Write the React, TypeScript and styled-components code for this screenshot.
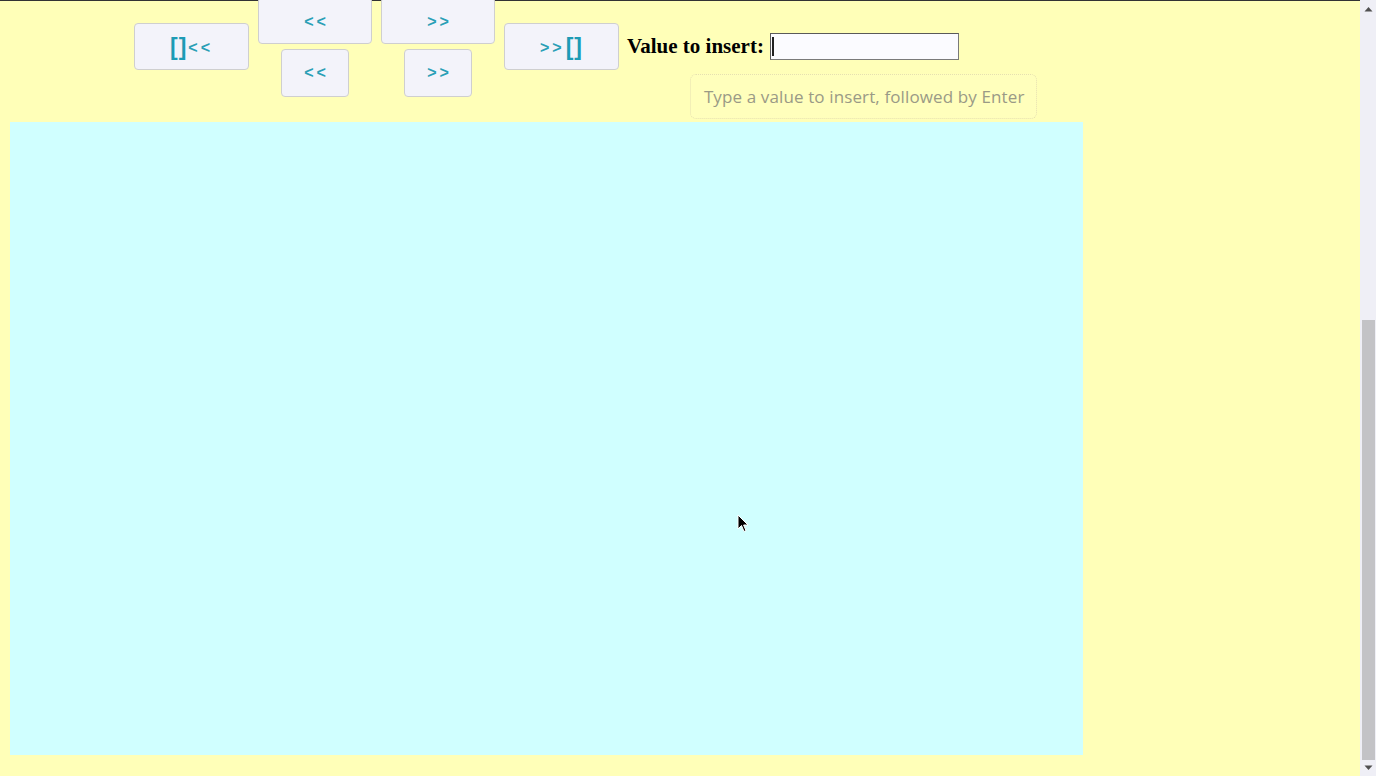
import React from "react";
import styled, { createGlobalStyle } from "styled-components";

const GlobalStyle = createGlobalStyle`
  html, body {
    margin: 0;
    padding: 0;
    height: 100%;
    overflow: hidden;
    background: #ffffb8;
  }
  #root {
    height: 100%;
  }
`;

const App: React.FC = () => {
  return (
    <>
      <GlobalStyle />
      <Page>
        <Main>
          <TopLine />
          <Toolbar>
            <SideButton>
              <Bracket>[]</Bracket>
              <Arrows>&lt;&lt;</Arrows>
            </SideButton>
            <StepColumn>
              <WideButton>
                <Arrows>&lt;&lt;</Arrows>
              </WideButton>
              <SmallButton>
                <Arrows>&lt;&lt;</Arrows>
              </SmallButton>
            </StepColumn>
            <StepColumn>
              <WideButton>
                <Arrows>&gt;&gt;</Arrows>
              </WideButton>
              <SmallButton>
                <Arrows>&gt;&gt;</Arrows>
              </SmallButton>
            </StepColumn>
            <SideButton>
              <Arrows>&gt;&gt;</Arrows>
              <Bracket>[]</Bracket>
            </SideButton>
            <InsertBox>
              <Label>Value to insert:</Label>
              <InputWrap>
                <ValueInput type="text" />
                <Caret />
                <Tooltip>Type a value to insert, followed by Enter</Tooltip>
              </InputWrap>
            </InsertBox>
          </Toolbar>
          <Canvas>
            <Pointer>
              <svg width="12" height="19" viewBox="0 0 12 19">
                <path
                  d="M1 1 L1 15 L4.5 11.5 L7 17.5 L9 16.6 L6.6 11 L11 11 Z"
                  fill="#000"
                  stroke="#fff"
                  strokeWidth="1"
                />
              </svg>
            </Pointer>
          </Canvas>
        </Main>
        <Scrollbar>
          <ScrollArrow>
            <svg width="9" height="6" viewBox="0 0 9 6">
              <path d="M0.5 5.5 L4.5 1 L8.5 5.5 Z" fill="#505050" />
            </svg>
          </ScrollArrow>
          <Track>
            <Thumb />
          </Track>
          <ScrollArrow>
            <svg width="9" height="6" viewBox="0 0 9 6">
              <path d="M0.5 0.5 L4.5 5 L8.5 0.5 Z" fill="#505050" />
            </svg>
          </ScrollArrow>
        </Scrollbar>
      </Page>
    </>
  );
};

const Page = styled.div`
  display: flex;
  width: 100%;
  height: 100%;
`;

const Main = styled.div`
  flex: 1;
  display: flex;
  flex-direction: column;
  overflow: hidden;
`;

const TopLine = styled.div`
  height: 1px;
  background: #333;
  flex-shrink: 0;
`;

const Toolbar = styled.div`
  display: flex;
  align-items: flex-start;
  gap: 9px;
  margin-top: -4px;
  padding-left: 134px;
  height: 100px;
  flex-shrink: 0;
`;

const ButtonBase = styled.div`
  box-sizing: border-box;
  display: flex;
  align-items: center;
  justify-content: center;
  gap: 1px;
  background: #f3f3fa;
  border: 1px solid #cfcfcf;
  border-radius: 4px;
  color: #2a9fb6;
  font-family: "Liberation Sans", Arial, sans-serif;
  font-weight: bold;
  cursor: pointer;
`;

const SideButton = styled(ButtonBase)`
  width: 115px;
  height: 47px;
  margin-top: 26px;
  padding-top: 2px;
`;

const StepColumn = styled.div`
  width: 114px;
  display: flex;
  flex-direction: column;
  align-items: center;
  gap: 5px;
`;

const WideButton = styled(ButtonBase)`
  width: 114px;
  height: 47px;
  padding-top: 3px;
  padding-left: 3px;
`;

const SmallButton = styled(ButtonBase)`
  width: 68px;
  height: 48px;
  padding-left: 3px;
`;

const Arrows = styled.span`
  font-size: 16px;
  letter-spacing: 3px;
`;

const Bracket = styled.span`
  font-size: 23px;
  letter-spacing: 1px;
  color: #1d9bb5;
`;

const InsertBox = styled.div`
  display: flex;
  align-items: center;
  margin-top: 36px;
  margin-left: -1px;
`;

const Label = styled.label`
  font-family: "Liberation Serif", "Times New Roman", serif;
  font-weight: bold;
  font-size: 21px;
  color: #000;
`;

const InputWrap = styled.div`
  position: relative;
  margin-left: 6px;
`;

const ValueInput = styled.input`
  box-sizing: border-box;
  display: block;
  width: 189px;
  height: 27px;
  border: 1px solid #7a7a7a;
  border-top-color: #5a5a5a;
  border-left-color: #5a5a5a;
  background: #fbfbff;
  outline: none;
  padding: 0 3px;
`;

const Caret = styled.span`
  position: absolute;
  left: 2px;
  top: 4px;
  width: 2px;
  height: 19px;
  background: #222;
`;

const Tooltip = styled.div`
  position: absolute;
  left: -80px;
  top: 41px;
  box-sizing: border-box;
  width: 347px;
  height: 45px;
  padding: 0 0 0 13px;
  display: flex;
  align-items: center;
  white-space: nowrap;
  border: 1px dotted #e6e0b0;
  border-radius: 6px;
  background: #ffffbc;
  color: #9a9a86;
  font-family: "Open Sans", "Noto Sans", sans-serif;
  font-size: 17px;
  letter-spacing: 0.12px;
`;

const Canvas = styled.div`
  position: relative;
  width: 1073px;
  height: 633px;
  margin-top: 25px;
  margin-left: 10px;
  background: #d0ffff;
  flex-shrink: 0;
`;

const Pointer = styled.div`
  position: absolute;
  left: 727px;
  top: 392px;
  line-height: 0;
`;

const Scrollbar = styled.div`
  width: 16px;
  display: flex;
  flex-direction: column;
  background: #efeff6;
  flex-shrink: 0;
`;

const ScrollArrow = styled.div`
  height: 17px;
  display: flex;
  align-items: center;
  justify-content: center;
`;

const Track = styled.div`
  flex: 1;
  display: flex;
  flex-direction: column;
  justify-content: flex-end;
  padding: 0 1px 0 2px;
`;

const Thumb = styled.div`
  height: 440px;
  margin-bottom: -1px;
  background: #c3c3c6;
`;

export default App;
